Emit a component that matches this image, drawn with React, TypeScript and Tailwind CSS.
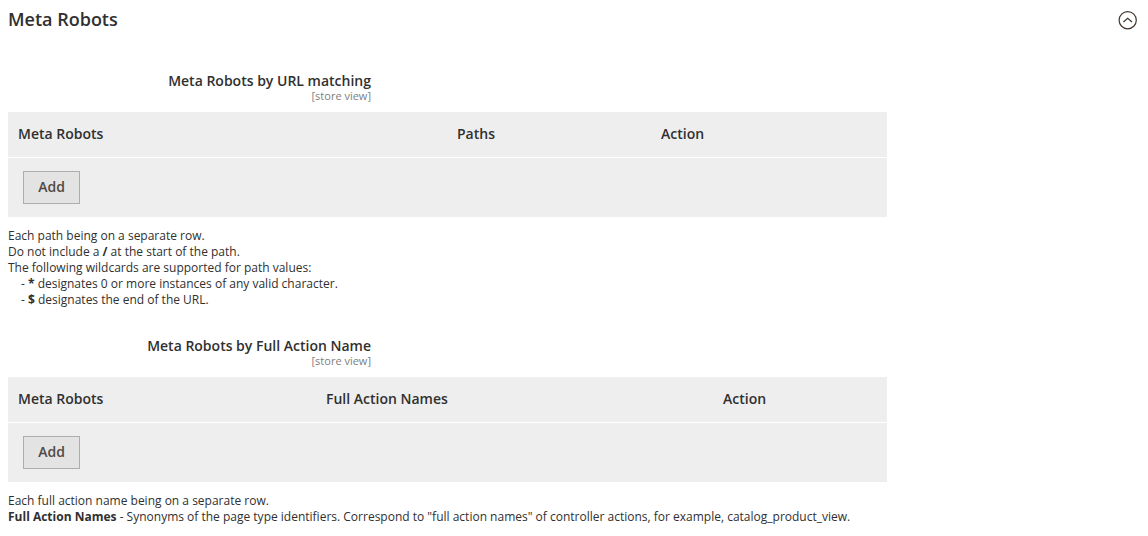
import type { ReactNode } from "react";

type Column = { label: string; width: string };

function FieldHeading({ id, title }: { id: string; title: string }) {
  return (
    <div className="w-[363px] text-right">
      <h3 id={id} className="text-[14px] leading-4 font-semibold text-[#303030]">{title}</h3>
      <p className="text-[11px] leading-[14px] text-[#808080]">[store view]</p>
    </div>
  );
}

function RuleTable({ labelledBy, columns }: { labelledBy: string; columns: Column[] }) {
  return (
    <table aria-labelledby={labelledBy} className="mt-[9px] w-full max-w-[879px] table-fixed border-collapse bg-[#eeeeee]">
      <thead>
        <tr className="border-b border-white">
          {columns.map((c) => (
            <th key={c.label} className={`${c.width} h-[45px] pl-[10px] text-left text-[14px] leading-5 font-semibold text-[#303030]`}>
              {c.label}
            </th>
          ))}
        </tr>
      </thead>
      <tbody>
        <tr>
          <td colSpan={3} className="h-[60px] pl-[15px] align-middle">
            <button type="button" className="block h-[33px] w-[57px] border border-[#adadad] bg-[#e3e3e3] text-[14px] leading-5 font-semibold text-[#514943]">
              Add
            </button>
          </td>
        </tr>
      </tbody>
    </table>
  );
}

function Note({ children }: { children: ReactNode }) {
  return <div className="mt-[11px] text-[12px] leading-4 text-[#303030]">{children}</div>;
}

export default function App() {
  return (
    <main className="px-2 pt-2 font-['Open_Sans',sans-serif]">
      <header className="flex items-start justify-between">
        <h2 className="text-[18px] leading-[22px] font-semibold text-[#303030]">Meta Robots</h2>
        <button type="button" aria-label="Collapse Meta Robots" className="size-6">
          <svg viewBox="0 0 24 24" className="size-6" fill="none" stroke="#41362f" strokeWidth="1.2">
            <circle cx="11.700" cy="12.200" r="8.600" />
            <path d="M7.400 14 11.700 10.300 16 14" />
          </svg>
        </button>
      </header>

      <section className="mt-[41px]">
        <FieldHeading id="url-rules" title="Meta Robots by URL matching" />
        <RuleTable
          labelledBy="url-rules"
          columns={[
            { label: "Meta Robots", width: "w-[439px]" },
            { label: "Paths", width: "w-[204px]" },
            { label: "Action", width: "w-[236px]" },
          ]}
        />
        <Note>
          <p>Each path being on a separate row.</p>
          <p>Do not include a <b>/</b> at the start of the path.</p>
          <p>The following wildcards are supported for path values:</p>
          <ul className="pl-[13px]">
            <li>- <b>*</b> designates 0 or more instances of any valid character.</li>
            <li>- <b>$</b> designates the end of the URL.</li>
          </ul>
        </Note>
      </section>

      <section className="mt-[30px]">
        <FieldHeading id="action-rules" title="Meta Robots by Full Action Name" />
        <RuleTable
          labelledBy="action-rules"
          columns={[
            { label: "Meta Robots", width: "w-[308px]" },
            { label: "Full Action Names", width: "w-[397px]" },
            { label: "Action", width: "w-[174px]" },
          ]}
        />
        <Note>
          <p>Each full action name being on a separate row.</p>
          <p>
            <b>Full Action Names</b> - Synonyms of the page type identifiers. Correspond to "full action names" of controller actions, for example, catalog_product_view.
          </p>
        </Note>
      </section>
    </main>
  );
}
